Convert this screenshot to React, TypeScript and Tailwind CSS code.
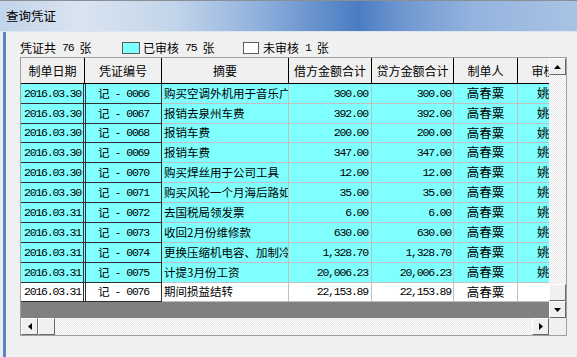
import React from "react";

const cjk = "font-['Noto_Sans_CJK_SC',sans-serif]";
const mono = "font-['Liberation_Mono',monospace] text-[11.5px] tracking-[-1.2px]";

type Row = { date: string; no: string; memo: string; amt: string; h: string; white?: boolean };

const rows: Row[] = [
  { date: "2016.03.30", no: "0066", memo: "购买空调外机用于音乐广场", amt: "300.00", h: "h-[20px]" },
  { date: "2016.03.30", no: "0067", memo: "报销去泉州车费", amt: "392.00", h: "h-[20px]" },
  { date: "2016.03.30", no: "0068", memo: "报销车费", amt: "200.00", h: "h-[19px]" },
  { date: "2016.03.30", no: "0069", memo: "报销车费", amt: "347.00", h: "h-[20px]" },
  { date: "2016.03.30", no: "0070", memo: "购买焊丝用于公司工具", amt: "12.00", h: "h-[20px]" },
  { date: "2016.03.30", no: "0071", memo: "购买风轮一个月海后路如意", amt: "35.00", h: "h-[20px]" },
  { date: "2016.03.31", no: "0072", memo: "去国税局领发票", amt: "6.00", h: "h-[20px]" },
  { date: "2016.03.31", no: "0073", memo: "收回2月份维修款", amt: "630.00", h: "h-[20px]" },
  { date: "2016.03.31", no: "0074", memo: "更换压缩机电容、加制冷剂", amt: "1,328.70", h: "h-[20px]" },
  { date: "2016.03.31", no: "0075", memo: "计提3月份工资", amt: "20,006.23", h: "h-[20px]" },
  { date: "2016.03.31", no: "0076", memo: "期间损益结转", amt: "22,153.89", h: "h-[19px]", white: true },
];

function Arrow({ dir }: { dir: "up" | "down" | "left" | "right" }) {
  const pts =
    dir === "up"
      ? "0,4 7,4 3.5,0"
      : dir === "down"
      ? "0,0 7,0 3.5,4"
      : dir === "left"
      ? "4,0 4,7 0,3.5"
      : "0,0 0,7 4,3.5";
  const w = dir === "up" || dir === "down" ? 7 : 4;
  const h = dir === "up" || dir === "down" ? 4 : 7;
  return (
    <svg width={w} height={h} viewBox={`0 0 ${w} ${h}`}>
      <polygon points={pts} fill="#000" />
    </svg>
  );
}

function SbButton({ children, cls }: { children?: React.ReactNode; cls: string }) {
  return (
    <div
      className={`${cls} shrink-0 flex items-center justify-center bg-[#f0f0f0] border border-t-white border-l-white border-r-[#696969] border-b-[#696969]`}
    >
      {children}
    </div>
  );
}

const hatch =
  "bg-[repeating-conic-gradient(#ffffff_0_25%,#e6e6e6_0_50%)] bg-[length:2px_2px]";

export default function App() {
  return (
    <div className={`w-[577px] h-[357px] bg-[#f0f0f0] flex flex-col overflow-hidden ${cjk} text-black`}>
      {/* title bar */}
      <div className="h-[32px] shrink-0 flex flex-col">
        <div className="h-[1px] bg-[#8a8f96]" />
        <div className="flex-1 flex items-center pl-[6px] bg-[linear-gradient(to_right,#c2d4ea_0%,#d9e4f1_14%,#c3d5ea_30%,#93b3dd_44%,#6a94cf_54%,#4b7cc3_62%,#6f98d0_70%,#94b3de_82%,#a9c3e4_100%)]">
          <span className="text-[12.5px] leading-none">查询凭证</span>
        </div>
        <div className="h-[1px] bg-[#dde5ef]" />
      </div>

      {/* body */}
      <div className="flex-1 flex">
        <div className="w-[3px] bg-[#e8eef6]" />
        <div className="w-[3px] bg-[#5d84c3]" />
        <div className="flex-1 flex flex-col pl-[14px]">
          {/* legend */}
          <div className="h-[25px] pt-[6px] flex items-center text-[12px] leading-none">
            <div className="w-[102px] flex items-center">
              <span>凭证共</span>
              <span className={`${mono} ml-[6px]`}>76</span>
              <span className="ml-[6px]">张</span>
            </div>
            <div className="w-[18px] h-[12px] bg-[#80ffff] border border-[#5a5a5a]" />
            <div className="w-[103px] flex items-center pl-[3px]">
              <span>已审核</span>
              <span className={`${mono} ml-[6px]`}>75</span>
              <span className="ml-[6px]">张</span>
            </div>
            <div className="w-[16px] h-[12px] bg-white border border-[#5a5a5a]" />
            <div className="flex items-center pl-[4px]">
              <span>未审核</span>
              <span className={`${mono} ml-[6px]`}>1</span>
              <span className="ml-[6px]">张</span>
            </div>
          </div>

          {/* grid */}
          <div className="w-[547px] border border-[#a0a0a0] flex flex-col">
            <div className="flex h-[260px]">
              {/* table area */}
              <div className="w-[528px] flex flex-col overflow-hidden">
                {/* header */}
                <div className="h-[26px] shrink-0 flex bg-[#f0f0f0] border-b border-black text-[12px] leading-none">
                  <div className="w-[64px] shrink-0 flex items-center justify-center border-r border-black">制单日期</div>
                  <div className="w-[77px] shrink-0 flex items-center justify-center border-r border-black">凭证编号</div>
                  <div className="w-[127px] shrink-0 flex items-center justify-center border-r border-black">摘要</div>
                  <div className="w-[83px] shrink-0 flex items-center justify-center border-r border-black">借方金额合计</div>
                  <div className="w-[82px] shrink-0 flex items-center justify-center border-r border-black">贷方金额合计</div>
                  <div className="w-[64px] shrink-0 flex items-center justify-center border-r border-black">制单人</div>
                  <div className="w-[64px] shrink-0 flex items-center justify-center border-r border-black">审核人</div>
                </div>
                {/* rows */}
                {rows.map((r) => (
                  <div
                    key={r.no}
                    className={`${r.h} shrink-0 flex ${r.white ? "bg-white" : "bg-[#80ffff]"} leading-none`}
                  >
                    <div className="w-[63px] shrink-0 flex items-center pl-[3px] border-r border-b border-[#303030]">
                      <span className={mono}>{r.date}</span>
                    </div>
                    <div className="w-[1px] shrink-0 border-b border-[#303030]" />
                    <div className="w-[77px] shrink-0 flex items-center justify-center border-l border-r border-b border-[#303030]">
                      <span className="text-[11.5px]">记</span>
                      <span className={`${mono} ml-[5px]`}>-</span>
                      <span className={`${mono} ml-[6px]`}>{r.no}</span>
                    </div>
                    <div className="w-[127px] shrink-0 flex items-center pl-[2px] border-r border-b border-[#c0c0c0] overflow-hidden">
                      <span className="text-[11.5px] whitespace-nowrap">{r.memo}</span>
                    </div>
                    <div className="w-[83px] shrink-0 flex items-center justify-end pr-[3px] border-r border-b border-[#c0c0c0]">
                      <span className={mono}>{r.amt}</span>
                    </div>
                    <div className="w-[82px] shrink-0 flex items-center justify-end pr-[2px] border-r border-b border-[#c0c0c0]">
                      <span className={mono}>{r.amt}</span>
                    </div>
                    <div className="w-[64px] shrink-0 flex items-center justify-center border-r border-b border-[#c0c0c0]">
                      <span className="text-[12.5px]">高春粟</span>
                    </div>
                    <div className="w-[64px] shrink-0 flex items-center justify-center border-r border-b border-[#c0c0c0]">
                      <span className="text-[12.5px]">{r.white ? "" : "姚丽"}</span>
                    </div>
                  </div>
                ))}
                <div className="flex-1 bg-[#808080]" />
              </div>
              {/* vertical scrollbar */}
              <div className="w-[17px] flex flex-col">
                <SbButton cls="h-[17px] w-[17px]">
                  <Arrow dir="up" />
                </SbButton>
                <div className={`flex-1 ${hatch}`} />
                <SbButton cls="h-[17px] w-[17px]" />
                <SbButton cls="h-[17px] w-[17px]">
                  <Arrow dir="down" />
                </SbButton>
              </div>
            </div>
            {/* horizontal scrollbar */}
            <div className="flex h-[17px]">
              <div className="w-[528px] flex">
                <SbButton cls="w-[17px] h-[17px]">
                  <Arrow dir="left" />
                </SbButton>
                <SbButton cls="w-[17px] h-[17px]" />
                <div className={`flex-1 ${hatch}`} />
                <SbButton cls="w-[17px] h-[17px]">
                  <Arrow dir="right" />
                </SbButton>
              </div>
              <div className="w-[17px] bg-[#f0f0f0]" />
            </div>
          </div>
        </div>
      </div>
    </div>
  );
}
